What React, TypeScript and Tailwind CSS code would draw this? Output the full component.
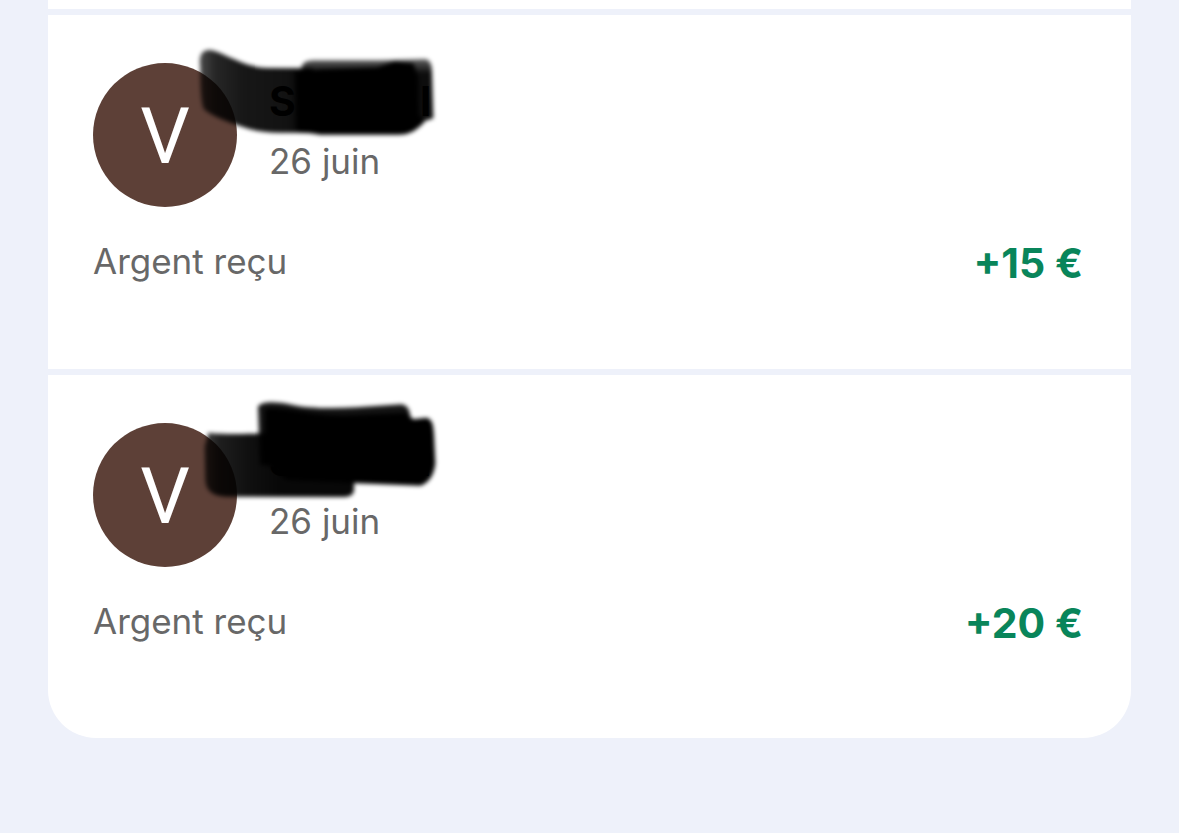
import type { ReactNode } from 'react';

type Transaction = {
  id: string;
  initial: string;
  nameStart: string;
  nameEnd: string;
  date: string;
  label: string;
  amount: string;
  mask: ReactNode;
};

function MaskOne() {
  return (
    <svg
      className="pointer-events-none absolute left-0 top-0 overflow-visible"
      width="370"
      height="180"
      viewBox="39 69 1110 540"
      aria-hidden="true"
    >
      <defs>
        <filter id="soft-one" x="-10%" y="-20%" width="120%" height="140%">
          <feGaussianBlur stdDeviation="6" />
        </filter>
        <linearGradient id="fade-one" gradientUnits="userSpaceOnUse" x1="355" y1="0" x2="690" y2="0">
          <stop offset="0" stopOpacity="0.7" />
          <stop offset="0.15" stopOpacity="0.85" />
          <stop offset="0.4" stopOpacity="0.91" />
          <stop offset="0.8" stopOpacity="0.93" />
          <stop offset="1" stopOpacity="1" />
        </linearGradient>
        <linearGradient id="edge-one" gradientUnits="userSpaceOnUse" x1="0" y1="55" x2="0" y2="100">
          <stop offset="0" stopOpacity="0.6" />
          <stop offset="1" stopOpacity="0.95" />
        </linearGradient>
      </defs>
      <g filter="url(#soft-one)">
        <path
          fill="url(#fade-one)"
          d="M360 75C356 42 370 27 395 31C440 42 495 84 565 84L700 85V280C630 278 560 282 510 268C460 252 400 232 372 208C360 180 362 110 360 75Z"
        />
        <path fill="url(#edge-one)" d="M664 80C672 66 680 62 700 61L900 61L1035 57C1053 59 1056 78 1056 100L1060 235L1025 246L960 270L690 180Z" />
        <path d="M645 96L720 88L890 82L945 64L1000 70L1014 110L1016 225L1034 245C1010 270 990 284 955 284L720 284L650 272Z" />
      </g>
    </svg>
  );
}

function MaskTwo() {
  return (
    <svg
      className="pointer-events-none absolute left-0 top-0 overflow-visible"
      width="370"
      height="180"
      viewBox="39 99 1110 540"
      aria-hidden="true"
    >
      <defs>
        <filter id="soft-two" x="-10%" y="-20%" width="120%" height="140%">
          <feGaussianBlur stdDeviation="6" />
        </filter>
        <linearGradient id="fade-two" gradientUnits="userSpaceOnUse" x1="370" y1="0" x2="600" y2="0">
          <stop offset="0" stopOpacity="0.72" />
          <stop offset="0.2" stopOpacity="0.88" />
          <stop offset="0.6" stopOpacity="0.94" />
          <stop offset="1" stopOpacity="0.97" />
        </linearGradient>
      </defs>
      <g filter="url(#soft-two)">
        <path
          fill="url(#fade-two)"
          d="M385 128C440 134 490 132 560 130L822 200V300C820 315 810 321 790 321L440 320C400 318 378 305 376 270L374 170Z"
        />
        <path fillOpacity="0.92" d="M534 50C545 32 590 35 625 42C680 56 760 56 830 52L965 43C985 47 990 62 992 86L900 240L540 225Z" />
        <path d="M555 56C620 48 680 76 800 76L975 68L1000 88L1040 83C1060 90 1060 110 1062 135L1066 220C1062 255 1048 278 1022 287L830 280L620 270L552 215Z" />
      </g>
    </svg>
  );
}

const transactions: Transaction[] = [
  {
    id: 't1',
    initial: 'V',
    nameStart: 'S',
    nameEnd: 'l',
    date: '26 juin',
    label: 'Argent reçu',
    amount: '+15 €',
    mask: <MaskOne />,
  },
  {
    id: 't2',
    initial: 'V',
    nameStart: 'S',
    nameEnd: 'l',
    date: '26 juin',
    label: 'Argent reçu',
    amount: '+20 €',
    mask: <MaskTwo />,
  },
];

function TransactionRow({ transaction }: { transaction: Transaction }) {
  return (
    <li className="bg-white pb-20 pl-[45px] pr-12 pt-12 last:rounded-b-[48px] last:pb-[89px]">
      <div className="relative flex gap-8">
        <div className="flex size-36 shrink-0 items-center justify-center rounded-full bg-[#5d4037] pt-1 font-[Roboto,sans-serif] text-[78px] leading-none text-white">
          {transaction.initial}
        </div>
        <div className="pt-2">
          <p className="flex w-[162px] justify-between text-[41px] font-bold leading-[60px] text-black">
            <span>{transaction.nameStart}</span>
            <span>{transaction.nameEnd}</span>
          </p>
          <p className="text-[35px] leading-[60px] text-[#686868]">{transaction.date}</p>
        </div>
        {transaction.mask}
      </div>
      <div className="mt-[26px] flex items-center justify-between">
        <p className="text-[35px] leading-[56px] text-[#686868]">{transaction.label}</p>
        <p className="pt-1 text-[41px] font-bold leading-[52px] text-[#09855a]">{transaction.amount}</p>
      </div>
    </li>
  );
}

export default function App() {
  return (
    <main className="min-h-screen bg-[#eef1fa] px-12 font-[Inter,'Liberation_Sans',sans-serif]">
      {/* Bottom edge of the previous entry */}
      <div className="h-[9px] bg-white" />
      <ul className="flex flex-col gap-[6px] pt-[6px]">
        {transactions.map((transaction) => (
          <TransactionRow key={transaction.id} transaction={transaction} />
        ))}
      </ul>
    </main>
  );
}
